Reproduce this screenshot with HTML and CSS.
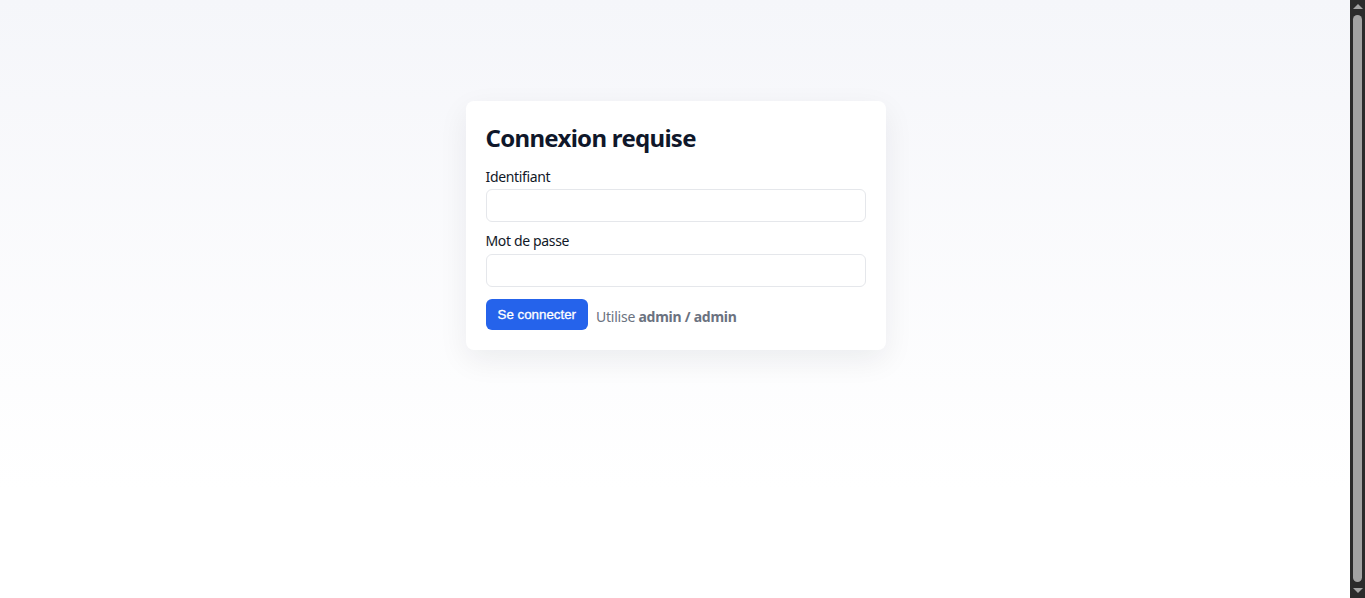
FILE: index.html
```html
<!DOCTYPE html>
<html lang="fr">
<head>
<meta charset="utf-8">
<title>Connexion requise</title>
<link rel="stylesheet" href="styles.css">
</head>
<body>
<div class="window">
  <main class="page">
    <form class="card" onsubmit="return false">
      <h1 class="title">Connexion requise</h1>
      <label class="label" for="user">Identifiant</label>
      <input class="input" id="user" type="text">
      <label class="label label-second" for="pass">Mot de passe</label>
      <input class="input" id="pass" type="password">
      <div class="actions">
        <button class="btn" type="submit">Se connecter</button>
        <span class="hint">Utilise <strong>admin / admin</strong></span>
      </div>
    </form>
  </main>
  <div class="scrollbar" aria-hidden="true">
    <span class="arrow arrow-up"></span>
    <span class="track"><span class="thumb"></span></span>
    <span class="arrow arrow-down"></span>
  </div>
</div>
</body>
</html>
```

FILE: styles.css
```css
html, body {
  margin: 0;
  height: 100%;
}

body {
  font-family: "Noto Sans", "DejaVu Sans", sans-serif;
  color: #111827;
  background: #ffffff;
  overflow: hidden;
}

.window {
  display: flex;
  height: 100vh;
}

.page {
  flex: 1;
  display: flex;
  justify-content: center;
  align-items: flex-start;
  padding: 101px 0 0 1px;
  background: linear-gradient(180deg, #f5f6fa 0px, #ffffff 490px) no-repeat;
  background-color: #ffffff;
}

/* scrollbar column */
.scrollbar {
  width: 15px;
  flex: none;
  background: #2b2b2b;
  display: flex;
  flex-direction: column;
  align-items: center;
}

.arrow {
  display: block;
  flex: none;
  width: 0;
  height: 0;
  border-left: 5px solid transparent;
  border-right: 5px solid transparent;
}

.arrow-up {
  margin: 4px 0 4px;
  border-bottom: 5px solid #a3a3a3;
}

.arrow-down {
  margin: 4px 0 5px;
  border-top: 5px solid #a3a3a3;
}

.track {
  flex: 1;
  display: flex;
  flex-direction: column;
  align-items: center;
  padding: 2px 0;
}

.thumb {
  flex: 1;
  width: 9px;
  border-radius: 5px;
  background: #a3a3a3;
}

/* card */
.card {
  width: 380px;
  padding: 20px;
  background: #ffffff;
  border-radius: 8px;
  box-shadow: 0 10px 30px rgba(15, 23, 42, 0.07);
  display: flex;
  flex-direction: column;
}

.title {
  margin: 0 0 12px;
  font-size: 24px;
  font-weight: 700;
  line-height: normal;
  letter-spacing: -0.7px;
  color: #0f172a;
}

.label {
  font-size: 14px;
  line-height: 19px;
  letter-spacing: -0.35px;
  color: #111827;
  margin-top: 1px;
  margin-bottom: 3px;
}

.label-second {
  margin-top: 9px;
  margin-bottom: 4px;
}

.input {
  box-sizing: border-box;
  height: 33px;
  width: 100%;
  margin: 0;
  border: 1px solid #e5e7eb;
  border-radius: 6px;
  background: #ffffff;
  color: #111827;
  padding: 6px 10px;
  font-family: "Noto Sans", sans-serif;
  font-size: 14px;
  outline: none;
}

.actions {
  display: flex;
  align-items: center;
  gap: 8px;
  margin-top: 12px;
}

.btn {
  font-family: "Liberation Sans", Arial, sans-serif;
  font-size: 13.333px;
  font-weight: 400;
  color: #ffffff;
  background: #2563eb;
  border: 0;
  border-radius: 6px;
  padding: 8px 12px;
  line-height: 15px;
  cursor: pointer;
  -webkit-text-stroke: 0.3px #ffffff;
}

.hint {
  font-size: 14px;
  letter-spacing: -0.25px;
  color: #6b7280;
  padding-top: 3px;
}

.hint strong {
  font-weight: 700;
}
```
